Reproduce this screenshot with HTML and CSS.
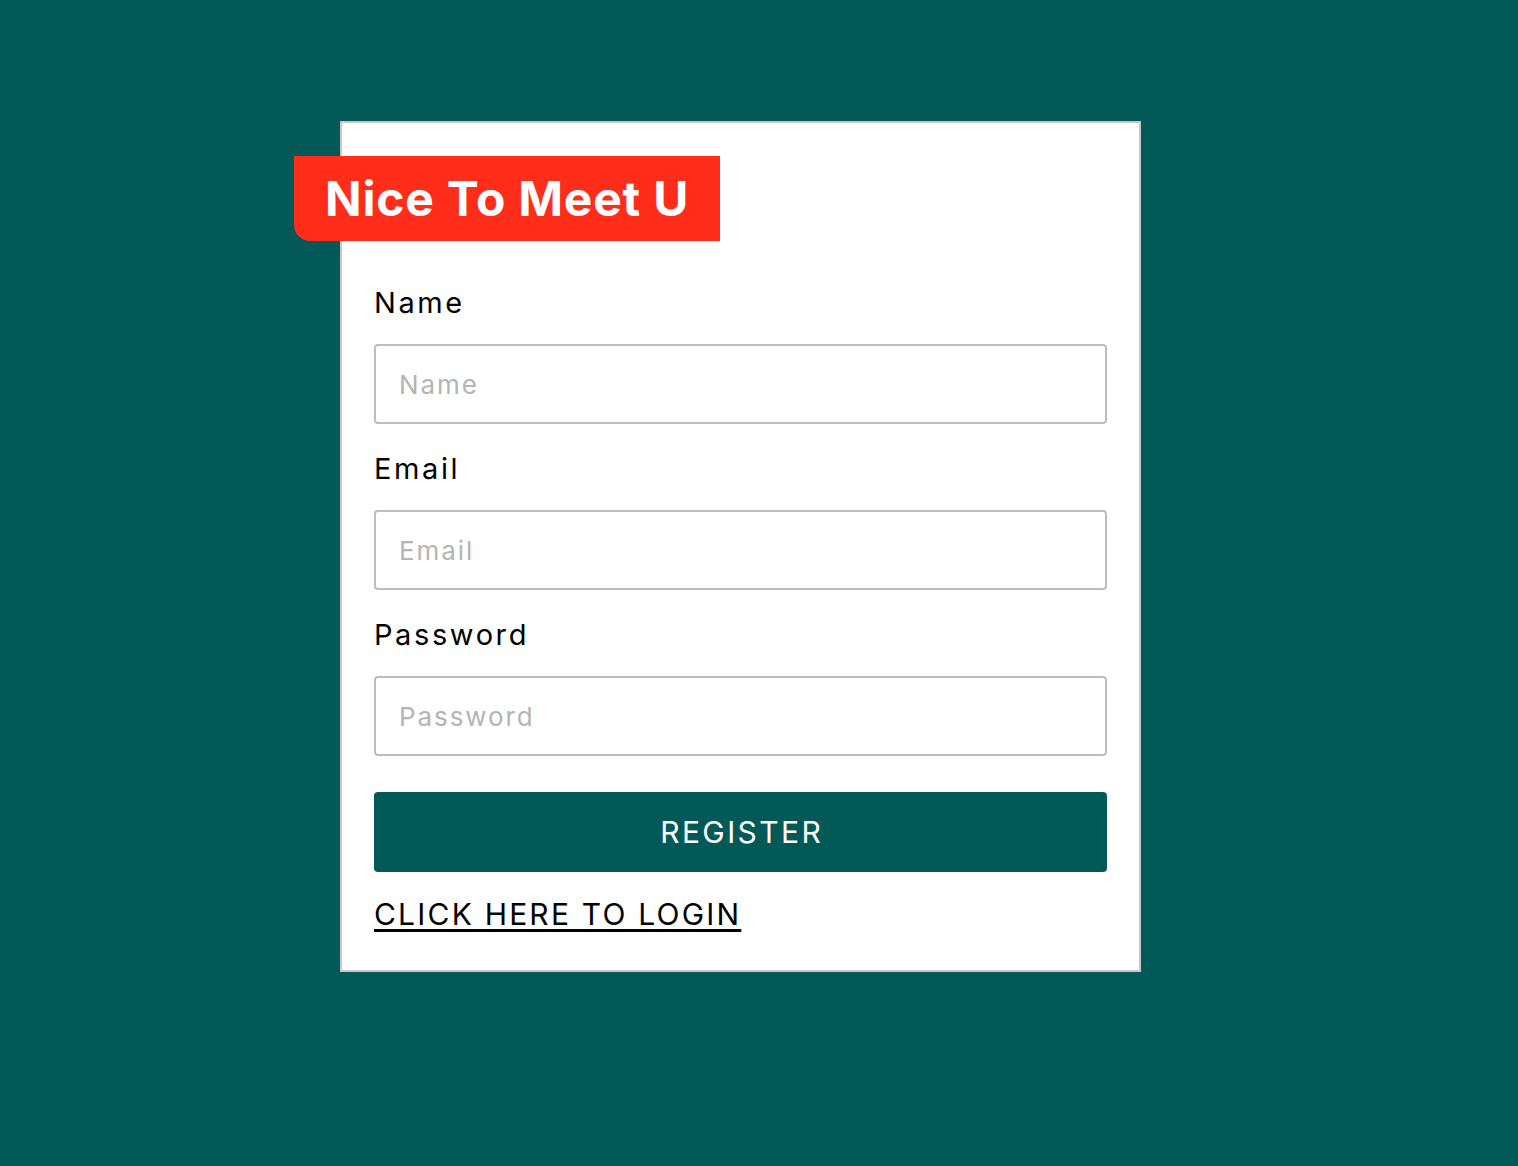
FILE: index.html
```html
<!DOCTYPE html>
<html lang="en">
<head>
<meta charset="utf-8">
<title>Register</title>
<link rel="stylesheet" href="styles.css">
</head>
<body>
<main class="page">
  <form class="card">
    <h1 class="badge">Nice To Meet U</h1>
    <label class="label" for="name">Name</label>
    <input class="field" id="name" type="text" placeholder="Name">
    <label class="label" for="email">Email</label>
    <input class="field" id="email" type="email" placeholder="Email">
    <label class="label" for="password">Password</label>
    <input class="field" id="password" type="password" placeholder="Password">
    <button class="btn" type="button">REGISTER</button>
    <a class="login" href="#">CLICK HERE TO LOGIN</a>
  </form>
</main>
</body>
</html>
```
FILE: styles.css
```css
html, body {
  margin: 0;
  padding: 0;
  background: #025957;
  font-family: Inter, "Liberation Sans", sans-serif;
}
.page {
  padding: 121px 0 0 340px;
  min-height: 1166px;
  box-sizing: border-box;
}
.card {
  width: 801px;
  box-sizing: border-box;
  background: #fff;
  border: 2px solid #c8c8c8;
  padding: 33px 32px 36px 32px;
  display: flex;
  flex-direction: column;
}
.badge {
  margin: 0 0 0 -80px;
  align-self: flex-start;
  height: 85px;
  box-sizing: border-box;
  padding: 0 31px;
  width: 426px;
  background: #ff2d1a;
  color: #fff;
  font-size: 48px;
  font-weight: 700;
  line-height: 85px;
  border-bottom-left-radius: 16px;
  white-space: nowrap;
  letter-spacing: 0.8px;
}
.label {
  display: block;
  font-size: 29px;
  line-height: 41px;
  letter-spacing: 2.6px;
  color: #000;
  margin: 24px 0 21px;
}
.badge + .label {
  margin-top: 41px;
}
.field {
  display: block;
  height: 80px;
  box-sizing: border-box;
  border: 2px solid #bdbdbd;
  border-radius: 4px;
  padding: 0 23px;
  font-family: inherit;
  font-size: 26px;
  letter-spacing: 1.9px;
  color: #000;
  outline: none;
}
.field::placeholder {
  color: #b4b4b4;
}
.btn {
  margin-top: 36px;
  height: 80px;
  border: none;
  border-radius: 4px;
  background: #025957;
  color: #fff;
  font-family: inherit;
  font-size: 30px;
  letter-spacing: 2.4px;
  padding: 0 0 0 2.4px;
  cursor: pointer;
}
.login {
  margin-top: 22px;
  align-self: flex-start;
  font-size: 30px;
  line-height: 40px;
  letter-spacing: 2.2px;
  color: #000;
  text-decoration-thickness: 3px;
  text-underline-offset: 4px;
}
```
